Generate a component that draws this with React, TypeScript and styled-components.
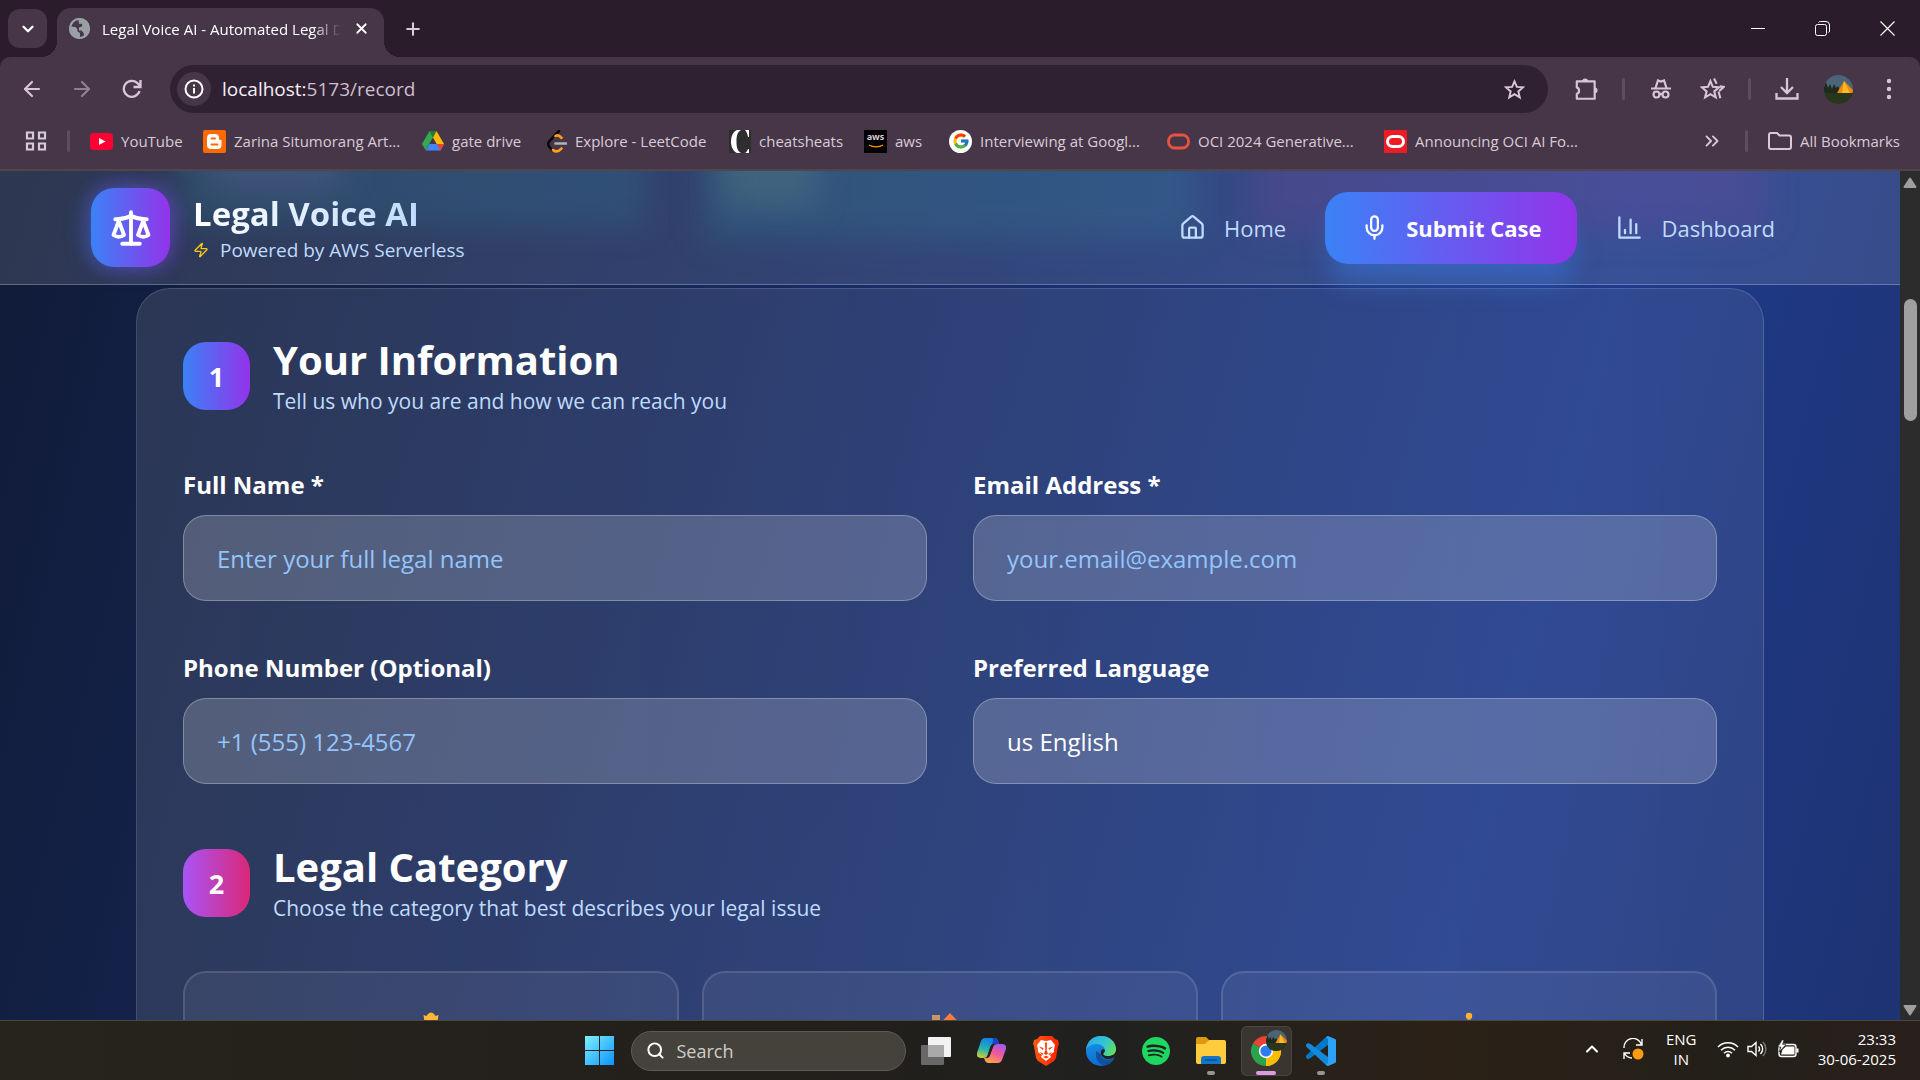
import React from "react";
import styled, { createGlobalStyle, css } from "styled-components";
import { House, Mic, Zap, Search, X, Plus, ChevronDown, ChevronUp, ChevronsRight, Scale, ArrowLeft, ArrowRight } from "lucide-react";
import { SiSpotify } from "react-icons/si";
import { FcGoogle } from "react-icons/fc";

const Global = createGlobalStyle`
  *, *::before, *::after { box-sizing: border-box; }
  html, body, #root { height: 100%; }
  body { margin: 0; overflow: hidden; background: #10182f; color: #fff; font-family: "Open Sans", "Noto Sans", sans-serif; }
  button, input, select { font: inherit; color: inherit; }
  button { border: 0; background: none; padding: 0; }
  h1, h2, p { margin: 0; }
  a { color: inherit; text-decoration: none; }
  svg { display: block; flex: none; }
`;

const Desktop = styled.div`
  height: 100vh;
  display: flex;
  flex-direction: column;
`;

/* ---------- browser chrome ---------- */

const Browser = styled.header`
  background: #2a1c2b;
  border-bottom: 2px solid #504549;
`;

const TabStrip = styled.div`
  display: flex;
  align-items: center;
  height: 57px;
  padding-left: 8px;
`;

const TabSearch = styled.button`
  display: grid;
  place-items: center;
  width: 39px;
  height: 39px;
  border-radius: 12px;
  background: #473647;
`;

const Tab = styled.div`
  position: relative;
  align-self: flex-end;
  display: flex;
  align-items: center;
  width: 327px;
  height: 49px;
  margin-left: 10px;
  padding: 0 14px 8px 12px;
  gap: 12px;
  border-radius: 14px 14px 0 0;
  background: #473647;
  font-size: 15px;
  &::before, &::after {
    content: "";
    position: absolute;
    bottom: 0;
    width: 16px;
    height: 16px;
  }
  &::before { right: 100%; background: radial-gradient(circle at 0 0, transparent 16px, #473647 16px); }
  &::after { left: 100%; background: radial-gradient(circle at 100% 0, transparent 16px, #473647 16px); }
`;

const TabTitle = styled.span`
  flex: 1;
  overflow: hidden;
  white-space: nowrap;
  mask-image: linear-gradient(90deg, #000 88%, transparent);
`;

const NewTab = styled.button`
  display: grid;
  place-items: center;
  width: 40px;
  height: 40px;
  margin-left: 9px;
  color: #dccbdc;
`;

const WindowButtons = styled.div`
  display: flex;
  height: 100%;
  margin-left: auto;
`;

const WindowButton = styled.button`
  display: grid;
  place-items: center;
  width: 65px;
`;

const Toolbar = styled.div`
  display: flex;
  align-items: center;
  height: 64px;
  padding: 0 9px 0 7px;
  border-radius: 10px 10px 0 0;
  background: #473647;
  color: #d9c5da;
`;

const NavButton = styled.button<{ $dim?: boolean }>`
  display: grid;
  place-items: center;
  width: 50px;
  height: 44px;
  opacity: ${(p) => (p.$dim ? 0.5 : 1)};
`;

const Omnibox = styled.div`
  flex: 1;
  display: flex;
  align-items: center;
  height: 48px;
  margin-left: 13px;
  padding: 0 22px 0 7px;
  gap: 11px;
  border-radius: 24px;
  background: #302132;
`;

const SiteInfo = styled.button`
  display: grid;
  place-items: center;
  width: 34px;
  height: 34px;
  border-radius: 50%;
  background: #473647;
  color: #fff;
`;

const Url = styled.span`
  flex: 1;
  font-size: 19px;
  color: #cdbfce;
  b { font-weight: 400; color: #f5eef5; }
`;

const ToolCluster = styled.div`
  display: flex;
  align-items: center;
  gap: 7px;
  margin-left: 16px;
`;

const ToolButton = styled.button`
  display: grid;
  place-items: center;
  width: 44px;
  height: 44px;
`;

const Divider = styled.span<{ $gap: number }>`
  width: 3px;
  height: 22px;
  margin: 0 ${(p) => p.$gap}px;
  border-radius: 2px;
  background: #5f4c60;
`;

const Bookmarks = styled.nav`
  display: flex;
  align-items: center;
  height: 48px;
  padding: 0 20px 8px 25px;
  background: #473647;
  color: #d8cbd8;
  font-size: 15px;
`;

const Bookmark = styled.a<{ $width?: number }>`
  display: flex;
  align-items: center;
  gap: 8px;
  white-space: nowrap;
  ${(p) => p.$width && css`width: ${p.$width}px;`}
`;

const Overflow = styled.button`
  margin-left: auto;
  margin-right: 2px;
`;

/* ---------- page ---------- */

const Viewport = styled.div`
  flex: 1;
  min-height: 0;
  display: flex;
`;

const Page = styled.div`
  flex: 1;
  min-width: 0;
  overflow: hidden;
  background: linear-gradient(104deg, #111b38 0%, #1e3a8a 78%, #1e3372 100%);
`;

const AppHeader = styled.header`
  position: relative;
  z-index: 1;
  display: flex;
  align-items: center;
  justify-content: space-between;
  height: 114px;
  padding: 0 89px 0 91px;
  border-bottom: 1px solid rgba(255, 255, 255, 0.25);
  background: linear-gradient(90deg, rgba(255, 255, 255, 0.12), rgba(255, 255, 255, 0.11));
`;

const GlowLayer = styled.div`
  position: absolute;
  inset: 0;
  overflow: hidden;
`;

const Glow = styled.span<{ $from: number; $to: number; $h: number; $color: string }>`
  position: absolute;
  top: -40px;
  left: ${(p) => p.$from}%;
  right: ${(p) => 100 - p.$to}%;
  height: ${(p) => p.$h + 40}px;
  background: ${(p) => p.$color};
  filter: blur(16px);
`;

const Brand = styled.div`
  position: relative;
  display: flex;
  align-items: center;
  gap: 23px;
`;

const BrandText = styled.div`
  padding-top: 5px;
`;

const Logo = styled.div`
  display: grid;
  place-items: center;
  width: 79px;
  height: 79px;
  border-radius: 23px;
  background: linear-gradient(90deg, #3b82f6, #9333ea);
  box-shadow: -4px 0 22px rgba(59, 130, 246, 0.4), 4px 0 22px rgba(147, 51, 234, 0.4);
`;

const BrandName = styled.h1`
  width: fit-content;
  font-size: 33px;
  line-height: 40px;
  background: linear-gradient(90deg, #fff, #bfdbfe);
  background-clip: text;
  color: transparent;
`;

const Tagline = styled.p`
  display: flex;
  align-items: center;
  gap: 11px;
  font-size: 19px;
  line-height: 32px;
  color: #bfdbfe;
`;

const AppNav = styled.nav`
  position: relative;
  display: flex;
  gap: 3px;
`;

const NavLink = styled.a<{ $active?: boolean }>`
  display: flex;
  align-items: center;
  gap: 18px;
  height: 72px;
  padding: 0 36px;
  border-radius: 23px;
  font-size: 22px;
  font-weight: 500;
  color: #bfdbfe;
  ${(p) =>
    p.$active &&
    css`
      color: #fff;
      font-weight: 700;
      background: linear-gradient(90deg, #3b82f6, #9333ea);
      box-shadow: 0 24px 28px -6px rgba(59, 130, 246, 0.42);
    `}
`;

const FormCard = styled.form`
  margin: 3px 136px 0;
  padding: 46px;
  border: 1px solid rgba(255, 255, 255, 0.14);
  border-radius: 34px;
  background: linear-gradient(90deg, rgba(255, 255, 255, 0.11), rgba(255, 255, 255, 0.08));
`;

const SectionHead = styled.div`
  display: flex;
  align-items: center;
  gap: 23px;
  margin-bottom: 47px;
`;

const StepBadge = styled.span<{ $from: string; $to: string }>`
  display: grid;
  place-items: center;
  width: 67px;
  height: 68px;
  border-radius: 23px;
  background: linear-gradient(90deg, ${(p) => p.$from}, ${(p) => p.$to});
  font-size: 27px;
  font-weight: 700;
`;

const SectionTitle = styled.h2`
  font-size: 40px;
  line-height: 50px;
`;

const SectionText = styled.p`
  font-size: 21px;
  line-height: 32px;
  color: #bfdbfe;
`;

const Fields = styled.div`
  display: grid;
  grid-template-columns: 1fr 1fr;
  gap: 46px;
  margin-bottom: 58px;
`;

const Field = styled.div`
  display: flex;
  flex-direction: column;
  gap: 9px;
`;

const Label = styled.label`
  font-size: 24px;
  font-weight: 700;
  line-height: 42px;
`;

const control = css`
  width: 100%;
  height: 86px;
  padding: 0 33px;
  border: 1px solid rgba(255, 255, 255, 0.28);
  border-radius: 23px;
  outline: 0;
  background: rgba(255, 255, 255, 0.19);
  font-size: 24px;
`;

const TextInput = styled.input`
  ${control}
  &::placeholder { color: #93c5fd; opacity: 1; }
`;

const Select = styled.select`
  ${control}
  appearance: none;
`;

const Categories = styled.div`
  display: grid;
  grid-template-columns: repeat(3, 1fr);
  gap: 23px;
`;

const Category = styled.button`
  display: flex;
  justify-content: center;
  height: 220px;
  padding-top: 38px;
  border: 2px solid rgba(255, 255, 255, 0.12);
  border-radius: 23px;
  background: rgba(255, 255, 255, 0.06);
`;

const Scrollbar = styled.div`
  display: flex;
  flex-direction: column;
  align-items: center;
  width: 20px;
  padding: 6px 0 4px;
  background: #2c2c2c;
`;

const Thumb = styled.span`
  width: 13px;
  height: 122px;
  margin: 111px 0 auto;
  border-radius: 7px;
  background: #9f9f9f;
`;

/* ---------- taskbar ---------- */

const Taskbar = styled.footer`
  display: grid;
  grid-template-columns: 1fr auto 1fr;
  align-items: center;
  height: 60px;
  border-top: 1px solid #4a4741;
  background: linear-gradient(90deg, #27241c, #221f1c 45%, #20211f 58%, #2b2117 75%, #232019 90%, #291f1c);
`;

const TaskGroup = styled.div`
  grid-column: 2;
  display: flex;
  align-items: center;
`;

const TaskButton = styled.button<{ $mark?: "idle" | "active" }>`
  position: relative;
  display: grid;
  place-items: center;
  width: 55px;
  height: 50px;
  border: solid transparent;
  border-width: 0 2px;
  background-clip: padding-box;
  border-radius: 7px;
  ${(p) => p.$mark === "active" && css`background-color: #3b3530; box-shadow: inset 0 0 0 1px #4a443e;`}
  ${(p) =>
    p.$mark &&
    css`
      &::after {
        content: "";
        position: absolute;
        bottom: 1px;
        left: calc(50% - ${p.$mark === "active" ? 10 : 4}px);
        width: ${p.$mark === "active" ? 20 : 8}px;
        height: 4px;
        border-radius: 2px;
        background: ${p.$mark === "active" ? "#d99be4" : "#979592"};
      }
    `}
`;

const SearchBox = styled.label`
  display: flex;
  align-items: center;
  gap: 12px;
  width: 275px;
  height: 40px;
  margin: 0 3px 0 4px;
  padding: 0 14px;
  border: 1px solid #5d5b55;
  border-radius: 20px;
  background: #45423c;
  input {
    width: 100%;
    border: 0;
    outline: 0;
    padding: 0;
    background: none;
    font-size: 18px;
  }
  input::placeholder { color: #cfcdca; opacity: 1; }
`;

const Tray = styled.div`
  display: flex;
  align-items: center;
  justify-content: flex-end;
  padding: 0 24px 3px 0;
  font-size: 15px;
  line-height: 20px;
`;

const TrayItem = styled.button<{ $width: number }>`
  display: grid;
  place-items: center;
  width: ${(p) => p.$width}px;
`;

const Language = styled.span`
  width: 55px;
  text-align: center;
`;

const Clock = styled.time`
  margin-left: 11px;
  text-align: right;
`;

/* ---------- drawings ---------- */

const Globe = () => (
  <svg width="21" height="21" viewBox="0 0 20 20">
    <circle cx="10" cy="10" r="10" fill="#9aa0a6" />
    <path d="M9 1.5c-3.6.3-6.6 3-7.3 6.600L6 8.500l2 2v2l2.500 2v4c4 0 4-2 3.500-4l-2-2.500H9.500V9l3-1V5.500h-3z" fill="#473647" />
    <path d="M10 4h4l2 2v3l3 2-1-6-4-3z" fill="#9aa0a6" />
    <circle cx="10" cy="10" r="9" fill="none" stroke="#9aa0a6" strokeWidth="2" />
  </svg>
);
const Star = ({ size = 23, more = false }: { size?: number; more?: boolean }) => (
  <svg width={size} height={size} viewBox="0 0 24 24" fill="none" stroke="currentColor" strokeWidth="2">
    {more ? (
      <path d="M10 4l2.300 5.400 5.900.5-4.500 3.900 1.400 5.800L10 16.500l-5.100 3.100 1.400-5.800L1.800 9.900l5.900-.5zM13.500 1.500l2.500 5M19 9l4 .5-4.500 4M17.800 14l1.700 6.500" />
    ) : (
      <path d="M12 3.500l2.500 5.800 6.300.5-4.800 4.200 1.500 6.200-5.500-3.400-5.500 3.400L8 14 3.200 9.800l6.300-.5z" />
    )}
  </svg>
);
const Puzzle = () => (
  <svg width="26" height="26" viewBox="0 0 24 24" fill="none" stroke="currentColor" strokeWidth="2" strokeLinejoin="round">
    <path d="M3.500 5H20v16H3.500v-4.500a3.200 3.200 0 0 0 0-6z" />
    <path d="M8.500 5a2.700 2.700 0 0 1 5.400 0zM20 10.500a2.700 2.700 0 0 1 0 5.400z" fill="currentColor" stroke="none" />
  </svg>
);
const Incognito = () => (
  <svg width="22" height="22" viewBox="0 0 22 22" fill="none" stroke="currentColor" strokeWidth="2.200">
    <path d="M1 10.500h20M5.500 10L8 2.500l3 1 3-1L16.500 10" />
    <circle cx="6.500" cy="16.500" r="3" />
    <circle cx="15.500" cy="16.500" r="3" />
    <path d="M9.500 16h3" />
  </svg>
);
const Download = () => (
  <svg width="24" height="24" viewBox="0 0 24 24" fill="none" stroke="currentColor" strokeWidth="2.300">
    <path d="M12 1v15M6 10l6 6 6-6M1.500 16v5.500h21V16" />
  </svg>
);
const Avatar = ({ size = 29 }: { size?: number }) => (
  <svg width={size} height={size} viewBox="0 0 29 29">
    <clipPath id={`av${size}`}><circle cx="14.500" cy="14.500" r="14.500" /></clipPath>
    <g clipPath={`url(#av${size})`}>
      <path d="M0 0h29v29H0z" fill="#4a6478" />
      <path d="M0 29V12l2-5 2 6 2-4 2 5 2-5 2 4 2-2 2 5h13v12z" fill="#1d2a1c" />
      <path d="M0 18h29v11H0z" fill="#28371b" />
      <path d="M20 6l9 9v3H13z" fill="#f08a08" />
      <path d="M20 6l-2 12h8z" fill="#ffb82a" />
    </g>
  </svg>
);
const Drive = () => (
  <svg width="22" height="20" viewBox="0 0 22 20">
    <path d="M7.500 0h7L11 6.500z" fill="#188038" />
    <path d="M7.500 0L0 13l3.500 6L11 6.500z" fill="#34a853" />
    <path d="M14.500 0L22 13h-7.300L11 6.500z" fill="#fbbc04" />
    <path d="M7.300 13H22l-3.500 6.500h-15z" fill="#4285f4" />
    <path d="M14.700 13H22l-3.500 6.500z" fill="#ea4335" />
  </svg>
);
const YouTube = () => (
  <svg width="23" height="17" viewBox="0 0 23 17">
    <rect width="23" height="17" rx="4" fill="#ff0033" />
    <path d="M9 5l6.500 3.500L9 12z" fill="#fff" />
  </svg>
);
const Blogger = () => (
  <svg width="23" height="23" viewBox="0 0 23 23">
    <rect width="23" height="23" rx="2" fill="#ff6a00" />
    <path d="M8 4h4a4 4 0 0 1 4 4v1.500l2.500.8V15a4 4 0 0 1-4 4H8a4 4 0 0 1-4-4V8a4 4 0 0 1 4-4z" fill="#fff" />
    <path d="M8.500 8.500h3.500M8.500 14.500h6" stroke="#ff6a00" strokeWidth="2" strokeLinecap="round" />
  </svg>
);
const Leet = () => (
  <svg width="20" height="23" viewBox="0 0 20 23" fill="none" strokeWidth="2.600" strokeLinecap="round">
    <path d="M12 1L3 10.500c-2.500 2.500-2.500 4.500 0 7l2 2.500" stroke="#0a0a0a" />
    <path d="M8.500 6c2-1.500 4-.5 6 1.800M6 20c3 2.500 6 1.500 8.500-1.500" stroke="#ffa116" />
    <path d="M8.500 13.500H19" stroke="#b3b3b3" />
  </svg>
);
const Cheat = () => (
  <svg width="22" height="23" viewBox="0 0 22 23">
    <path d="M0 0h22v23H0z" fill="#2e2e2e" />
    <path d="M8 0h4C8 2 7.500 7 7.500 11.500S8 21 12 23H8C4 21 2 17 2 11.500S4 2 8 0zM16 0h4v7h-1c-.5-3-1.500-5.500-3-7zM20 23h-4c1.500-1 2.500-2.500 3-4h1z" fill="#fff" />
  </svg>
);
const AwsTile = styled.span`
  display: grid;
  place-items: center;
  width: 23px;
  height: 23px;
  padding-bottom: 3px;
  background: #000;
  font-size: 9px;
  font-weight: 700;
  line-height: 10px;
  svg { margin-top: -2px; }
`;
const Aws = () => (
  <AwsTile>
    aws
    <svg width="16" height="4" viewBox="0 0 16 4" fill="none" stroke="#f90" strokeWidth="1.300"><path d="M1 1c4 2.500 10 2.500 14 0" /></svg>
  </AwsTile>
);
const GoogleDisc = styled.span`
  display: grid;
  place-items: center;
  width: 23px;
  height: 23px;
  border-radius: 50%;
  background: #fff;
`;
const Oracle = ({ box }: { box?: boolean }) => (
  <svg width="23" height="23" viewBox="0 0 23 23">
    {box && <path d="M0 0h23v23H0z" fill="#ed1c24" />}
    <rect x={box ? 3.5 : 1.5} y={box ? 6.5 : 5} width={box ? 16 : 20} height={box ? 10 : 13} rx={box ? 5 : 6} fill="none" stroke={box ? "#fff" : "#e8523f"} strokeWidth={box ? 3 : 2.8} />
  </svg>
);
const Bars = () => (
  <svg width="27" height="27" viewBox="0 0 24 24" fill="none" stroke="currentColor" strokeWidth="2" strokeLinecap="round" strokeLinejoin="round">
    <path d="M3 3v18h18M8 17v-3M13 17V5M18 17V9" />
  </svg>
);
const WindowsLogo = () => (
  <svg width="29" height="29" viewBox="0 0 29 29">
    <linearGradient id="win" x1="0" y1="0" x2="1" y2="1"><stop stopColor="#7ff0ff" /><stop offset="1" stopColor="#0a93ff" /></linearGradient>
    <path d="M0 0h14v14H0zM15 0h14v14H15zM0 15h14v14H0zM15 15h14v14H15z" fill="url(#win)" />
  </svg>
);
const TaskView = () => (
  <svg width="30" height="28" viewBox="0 0 30 28">
    <rect y="8" width="23" height="20" rx="1" fill="#686868" />
    <rect x="7" width="23" height="20" rx="1" fill="#f2f2f2" />
    <path d="M7 8h16v12H7z" fill="#a9a9a9" />
  </svg>
);
const Copilot = () => (
  <svg width="29" height="27" viewBox="0 0 29 27">
    <defs>
      <linearGradient id="cpA" x1=".3" y1="0" x2="0" y2="1"><stop stopColor="#1583e8" /><stop offset=".5" stopColor="#2ab3b0" /><stop offset="1" stopColor="#e6d420" /></linearGradient>
      <linearGradient id="cpB" x1=".8" y1="0" x2=".3" y2="1"><stop stopColor="#9a5cf0" /><stop offset=".5" stopColor="#f0589a" /><stop offset="1" stopColor="#ffa54a" /></linearGradient>
    </defs>
    <path d="M8 1h9c3 0 4 2 5 6h-4c-3 0-4 1-5 4l-2 6c-1 3-2 4-5 4H4c-3 0-5-2-4-5L4 4c1-2 2-3 4-3z" fill="url(#cpA)" />
    <path d="M17 1c3 0 4 2 5 6h-4c-2 0-3 .5-4 2.500L16 4c.5-2-.5-3-2-3z" fill="#1745c4" />
    <path d="M21 26h-9c-3 0-4-2-5-5 3 0 5 0 6-3l3-8c1-2 2-3 5-3h4c3 0 5 2 4 5l-4 11c-1 2-2 3-4 3z" fill="url(#cpB)" />
    <path d="M13 11c1-3 2-4 4-4l-4 11c-.7 2-1.500 2.700-3 3z" fill="#25221c" />
  </svg>
);
const Brave = () => (
  <svg width="26" height="30" viewBox="0 0 26 30">
    <linearGradient id="brv"><stop stopColor="#ff5a10" /><stop offset="1" stopColor="#ff2000" /></linearGradient>
    <path d="M7 0h12l3 3 3 1 1 4-1 2-2 12-2 3-8 5-8-5-2-3L1 10 0 8l1-4 3-1z" fill="url(#brv)" />
    <path d="M8 4l5 1 5-1 4 5-1 4 0 3-4 3 1 2-5 4-5-4 1-2-4-3 0-3-1-4z" fill="#fff" />
    <path d="M5.500 10.500l5 1.500-.5 2zM20.500 10.500l-5 1.500.5 2zM12 6.500h2l-.3 8 1.300 3-2 1.500-2-1.500 1.300-3zM7 16l4 2-2 1zM19 16l-4 2 2 1zM10 21l3-1.300 3 1.300-3 1.500z" fill="#ff3c08" />
  </svg>
);
const Edge = () => (
  <svg width="30" height="30" viewBox="0 0 30 30">
    <defs>
      <linearGradient id="eg1" y1=".2" y2=".6"><stop stopColor="#2ba7ef" /><stop offset=".6" stopColor="#35c5d0" /><stop offset="1" stopColor="#62dd60" /></linearGradient>
      <linearGradient id="eg2" x1="0" y1="0" x2=".4" y2="1"><stop stopColor="#1a9be8" /><stop offset="1" stopColor="#0d6ad0" /></linearGradient>
    </defs>
    <circle cx="15" cy="15" r="15" fill="url(#eg2)" />
    <path d="M30 13c0 5-4 7-8 7-3 0-5-1-4.500-2.500 1-1 1.500-2 1.500-3.500-3-2.500-5 1-4 4 .5 4 7 6.500 12.500 4l4-2z" fill="#25221c" />
    <path d="M0 14C1 5 7 0 15 0c9 0 15 6 15 13 0 5-4 7-8 7-3 0-5-1-4.500-2.500 1-1 1.500-2 1.500-3.500 0-3-4-6-9-6-5 0-9 3-10 6z" fill="url(#eg1)" />
    <path d="M10.500 15c-2 6 1 13 8 14.500 4-.5 8-3 9.500-7-6 3-13 1-13-4z" fill="#10509e" />
  </svg>
);
const Folder = () => (
  <svg width="30" height="27" viewBox="0 0 30 27">
    <path d="M0 2a2 2 0 0 1 2-2h8l3 3-2 6H0z" fill="#dd9a0c" />
    <path d="M13 3h15a2 2 0 0 1 2 2v20a2 2 0 0 1-2 2H2a2 2 0 0 1-2-2V7h9z" fill="#ffcc3e" />
    <path d="M5 27v-5a3 3 0 0 1 3-3h14a3 3 0 0 1 3 3v5z" fill="#1277c8" />
    <path d="M9 23h12" stroke="#0b4f91" strokeWidth="1.500" />
  </svg>
);
const ChromeIcon = () => (
  <svg width="30" height="30" viewBox="0 0 30 30" overflow="visible">
    <path d="M15 15L2 7.500A15 15 0 0 1 28 7.500z" fill="#ea4335" />
    <path d="M15 15L28 7.500A15 15 0 0 1 15 30z" fill="#fbbc04" />
    <path d="M15 15v.1L15 30A15 15 0 0 1 2 7.500z" fill="#2ba24c" />
    <path d="M15 8.500h13.500A15 15 0 0 1 15 30l6-11z" fill="#fbbc04" />
    <circle cx="15" cy="15" r="7.200" fill="#fff" />
    <circle cx="15" cy="15" r="5.600" fill="#2f7bf0" />
    <g transform="translate(15 -6)"><Avatar size={21} /></g>
  </svg>
);
const VsCode = () => (
  <svg width="30" height="30" viewBox="0 0 30 30">
    <path d="M22 0v9L4.500 22 2 23.500 0 21.500v-2L20.500.5z" fill="#0078c8" />
    <path d="M22 30v-9L4.500 8 2 7 0 8.500v2l20.500 19z" fill="#1688d8" />
    <path d="M22 0l7 3a1.500 1.500 0 0 1 1 1.500v21a1.500 1.500 0 0 1-1 1.500l-7 3-2-1.500 2-1.500V3l-2-1.500z" fill="#2da3f5" />
  </svg>
);
const Sync = () => (
  <svg width="22" height="22" viewBox="0 0 22 22" fill="none" stroke="#fff" strokeWidth="1.400">
    <path d="M2 10A9 9 0 0 1 19.500 6.500M20 1v6h-6M10 20a9 9 0 0 1-7.500-4.500M2 21v-6h6" />
    <circle cx="16" cy="16" r="5.500" fill="#ff9c12" stroke="none" />
  </svg>
);
const Wifi = () => (
  <svg width="22" height="18" viewBox="0 0 22 18" fill="none" stroke="#fff" strokeWidth="1.500">
    <path d="M1 7a14 14 0 0 1 20 0M4 10.200a10 10 0 0 1 14 0M7 13.200a5.800 5.800 0 0 1 8 0" />
    <circle cx="11" cy="15.500" r="1.900" fill="#fff" stroke="none" />
  </svg>
);
const Volume = () => (
  <svg width="22" height="18" viewBox="0 0 22 18" fill="none" stroke="#fff" strokeWidth="1.400">
    <path d="M1 6.500h3.500L9 2.500v13L4.500 11.500H1zM11.500 6.500a3.500 3.500 0 0 1 0 5M13.500 4a7 7 0 0 1 0 10" />
    <path d="M16 2a10 10 0 0 1 0 14" stroke="#777" />
  </svg>
);
const Battery = () => (
  <svg width="22" height="18" viewBox="0 0 22 18">
    <rect x="2" y="4.500" width="17" height="12" rx="2.500" fill="none" stroke="#fff" strokeWidth="1.400" />
    <path d="M9 6.500h8.500v8H4l1.500-5zM19.500 8.500h2v4h-2z" fill="#fff" />
    <path d="M5 0L1 7h3L2 12l7-7.500H5.500L7 0z" fill="#fff" stroke="#25221c" strokeWidth=".6" />
  </svg>
);
const Arrow = ({ down }: { down?: boolean }) => (
  <svg width="14" height="11" viewBox="0 0 14 11"><path d={down ? "M1.500 1h11L7 9.500z" : "M1.500 10h11L7 1.500z"} fill="#9f9f9f" stroke="#9f9f9f" strokeWidth="2" strokeLinejoin="round" /></svg>
);
const CrownPerson = () => (
  <svg width="46" height="46" viewBox="0 0 46 46">
    <path d="M15.500 4l3 1 1-1.500Q23-.5 26.500 3.500l1 1.500 3-1-1 7h-13z" fill="#ffb833" />
    <circle cx="23" cy="18" r="9" fill="#ffcf7a" />
    <path d="M7 46c0-12 8-17 16-17s16 5 16 17z" fill="#3e68c9" />
  </svg>
);
const HouseArt = () => (
  <svg width="46" height="46" viewBox="0 0 46 46">
    <path d="M5 4h8v14H5z" fill="#c99468" />
    <path d="M23 2L2 24h42z" fill="#ff7b3d" />
    <path d="M8 22h30v22H8z" fill="#ffd9a3" />
  </svg>
);
const ScalesArt = () => (
  <svg width="46" height="46" viewBox="0 0 46 46">
    <path d="M21.500 7h3v34h-3zM4 12h38v3H4zM12 41h22v4H12z" fill="#e8894a" />
    <circle cx="23" cy="5" r="3.200" fill="#ffb52e" />
    <path d="M2 28h14a7 7 0 0 1-14 0zM30 28h14a7 7 0 0 1-14 0z" fill="#ffb52e" />
  </svg>
);

const bookmarks = [
  { label: "YouTube", icon: <YouTube />, width: 113 },
  { label: "Zarina Situmorang Art...", icon: <Blogger />, width: 219 },
  { label: "gate drive", icon: <Drive />, width: 125 },
  { label: "Explore - LeetCode", icon: <Leet />, width: 182 },
  { label: "cheatsheats", icon: <Cheat />, width: 135 },
  { label: "aws", icon: <Aws />, width: 85 },
  { label: "Interviewing at Googl...", icon: <GoogleDisc><FcGoogle size={18} /></GoogleDisc>, width: 218 },
  { label: "OCI 2024 Generative...", icon: <Oracle />, width: 217 },
  { label: "Announcing OCI AI Fo...", icon: <Oracle box />, width: 200 },
];

const tasks: { name: string; icon: React.ReactNode; mark?: "idle" | "active" }[] = [
  { name: "Task view", icon: <TaskView /> },
  { name: "Copilot", icon: <Copilot /> },
  { name: "Brave", icon: <Brave /> },
  { name: "Edge", icon: <Edge /> },
  { name: "Spotify", icon: <SiSpotify size={28} color="#1ed760" /> },
  { name: "File Explorer", icon: <Folder />, mark: "idle" },
  { name: "Chrome", icon: <ChromeIcon />, mark: "active" },
  { name: "Visual Studio Code", icon: <VsCode />, mark: "idle" },
];

const BrowserChrome = () => (
  <Browser>
    <TabStrip>
      <TabSearch aria-label="Search tabs"><ChevronDown size={18} strokeWidth={3} /></TabSearch>
      <Tab>
        <Globe />
        <TabTitle>Legal Voice AI - Automated Legal Do</TabTitle>
        <X size={17} strokeWidth={2.5} />
      </Tab>
      <NewTab aria-label="New tab"><Plus size={20} strokeWidth={2.5} /></NewTab>
      <WindowButtons>
        <WindowButton aria-label="Minimize"><svg width="14" height="14" stroke="#fff"><path d="M0 6.500h14" /></svg></WindowButton>
        <WindowButton aria-label="Restore">
          <svg width="15" height="15" viewBox="0 0 15 15" fill="none" stroke="#fff"><rect x=".5" y="3.500" width="11" height="11" rx="2" /><path d="M3.500 1.500Q4 .5 5.500 .5H11a3.500 3.500 0 0 1 3.500 3.500v6q0 1.200-1 1.500" /></svg>
        </WindowButton>
        <WindowButton aria-label="Close"><svg width="15" height="15" stroke="#fff" strokeWidth="1.200"><path d="M.5 .5l14 14M14.500 .5l-14 14" /></svg></WindowButton>
      </WindowButtons>
    </TabStrip>
    <Toolbar>
      <NavButton aria-label="Back"><ArrowLeft size={24} strokeWidth={2.2} /></NavButton>
      <NavButton aria-label="Forward" $dim><ArrowRight size={24} strokeWidth={2.2} /></NavButton>
      <NavButton aria-label="Reload">
        <svg width="20" height="20" viewBox="0 0 20 20" fill="none" stroke="currentColor" strokeWidth="2.300"><path d="M17.500 12A8 8 0 1 1 15.800 4.500L18 7M18.500 1v7h-7" /></svg>
      </NavButton>
      <Omnibox>
        <SiteInfo aria-label="Site information">
          <svg width="20" height="20" viewBox="0 0 20 20" fill="none" stroke="currentColor" strokeWidth="2"><circle cx="10" cy="10" r="8.500" /><path d="M10 9v5.500M10 5.500v2" /></svg>
        </SiteInfo>
        <Url><b>localhost:</b>5173/record</Url>
        <Star />
      </Omnibox>
      <ToolCluster>
        <ToolButton aria-label="Extensions"><Puzzle /></ToolButton>
        <Divider $gap={7} />
        <ToolButton aria-label="Incognito"><Incognito /></ToolButton>
        <ToolButton aria-label="Collections"><Star size={25} more /></ToolButton>
        <Divider $gap={7} />
        <ToolButton aria-label="Downloads"><Download /></ToolButton>
        <ToolButton aria-label="Profile"><Avatar /></ToolButton>
        <ToolButton aria-label="Menu"><svg width="6" height="22" fill="currentColor"><circle cx="3" cy="3" r="2.200" /><circle cx="3" cy="11" r="2.200" /><circle cx="3" cy="19" r="2.200" /></svg></ToolButton>
      </ToolCluster>
    </Toolbar>
    <Bookmarks>
      <svg width="22" height="20" viewBox="0 0 22 20" fill="none" stroke="currentColor" strokeWidth="2.200"><path d="M2 1.500h6v6H2zM14 1.500h6v6h-6zM2 12.500h6v6H2zM14 12.500h6v6h-6z" /></svg>
      <Divider $gap={20} />
      {bookmarks.map((b) => (
        <Bookmark key={b.label} href="#" $width={b.width}>{b.icon}{b.label}</Bookmark>
      ))}
      <Overflow aria-label="More bookmarks"><ChevronsRight size={22} /></Overflow>
      <Divider $gap={20} />
      <Bookmark href="#">
        <svg width="24" height="18" viewBox="0 0 24 18" fill="none" stroke="currentColor" strokeWidth="2"><path d="M1 3q0-2 2-2h6l2.500 2.500H21q2 0 2 2V15q0 2-2 2H3q-2 0-2-2z" /></svg>
        All Bookmarks
      </Bookmark>
    </Bookmarks>
  </Browser>
);

export default function App() {
  return (
    <Desktop>
      <Global />
      <BrowserChrome />
      <Viewport>
        <Page>
          <AppHeader>
            <GlowLayer>
              <Glow $from={9} $to={34} $h={56} $color="rgba(45, 130, 160, 0.24)" />
              <Glow $from={11} $to={18} $h={20} $color="rgba(140, 120, 180, 0.2)" />
              <Glow $from={37} $to={63} $h={68} $color="rgba(45, 130, 150, 0.26)" />
              <Glow $from={38} $to={43} $h={36} $color="rgba(110, 150, 140, 0.26)" />
              <Glow $from={66} $to={93} $h={62} $color="rgba(140, 70, 160, 0.2)" />
            </GlowLayer>
            <Brand>
              <Logo><Scale size={42} strokeWidth={2.2} /></Logo>
              <BrandText>
                <BrandName>Legal Voice AI</BrandName>
                <Tagline><Zap size={16} color="#facc15" />Powered by AWS Serverless</Tagline>
              </BrandText>
            </Brand>
            <AppNav>
              <NavLink href="#"><House size={27} />Home</NavLink>
              <NavLink href="#" $active><Mic size={27} />Submit Case</NavLink>
              <NavLink href="#"><Bars />Dashboard</NavLink>
            </AppNav>
          </AppHeader>
          <FormCard>
            <SectionHead>
              <StepBadge $from="#3b82f6" $to="#9333ea">1</StepBadge>
              <div>
                <SectionTitle>Your Information</SectionTitle>
                <SectionText>Tell us who you are and how we can reach you</SectionText>
              </div>
            </SectionHead>
            <Fields>
              <Field>
                <Label htmlFor="name">Full Name *</Label>
                <TextInput id="name" placeholder="Enter your full legal name" />
              </Field>
              <Field>
                <Label htmlFor="email">Email Address *</Label>
                <TextInput id="email" type="email" placeholder="your.email@example.com" />
              </Field>
              <Field>
                <Label htmlFor="phone">Phone Number (Optional)</Label>
                <TextInput id="phone" type="tel" placeholder="+1 (555) 123-4567" />
              </Field>
              <Field>
                <Label htmlFor="language">Preferred Language</Label>
                <Select id="language"><option>us English</option></Select>
              </Field>
            </Fields>
            <SectionHead>
              <StepBadge $from="#a855f7" $to="#db2777">2</StepBadge>
              <div>
                <SectionTitle>Legal Category</SectionTitle>
                <SectionText>Choose the category that best describes your legal issue</SectionText>
              </div>
            </SectionHead>
            <Categories>
              <Category type="button"><CrownPerson /></Category>
              <Category type="button"><HouseArt /></Category>
              <Category type="button"><ScalesArt /></Category>
            </Categories>
          </FormCard>
        </Page>
        <Scrollbar>
          <Arrow />
          <Thumb />
          <Arrow down />
        </Scrollbar>
      </Viewport>
      <Taskbar>
        <TaskGroup>
          <TaskButton aria-label="Start"><WindowsLogo /></TaskButton>
          <SearchBox><Search size={19} strokeWidth={2.5} /><input aria-label="Search" placeholder="Search" /></SearchBox>
          {tasks.map((t) => (
            <TaskButton key={t.name} aria-label={t.name} $mark={t.mark}>{t.icon}</TaskButton>
          ))}
        </TaskGroup>
        <Tray>
          <TrayItem $width={40} aria-label="Hidden icons"><ChevronUp size={20} strokeWidth={2.5} /></TrayItem>
          <TrayItem $width={42} aria-label="Updates"><Sync /></TrayItem>
          <Language>ENG<br />IN</Language>
          <TrayItem $width={38} aria-label="Network"><Wifi /></TrayItem>
          <TrayItem $width={22} aria-label="Volume"><Volume /></TrayItem>
          <TrayItem $width={38} aria-label="Battery"><Battery /></TrayItem>
          <Clock>23:33<br />30-06-2025</Clock>
        </Tray>
      </Taskbar>
    </Desktop>
  );
}
